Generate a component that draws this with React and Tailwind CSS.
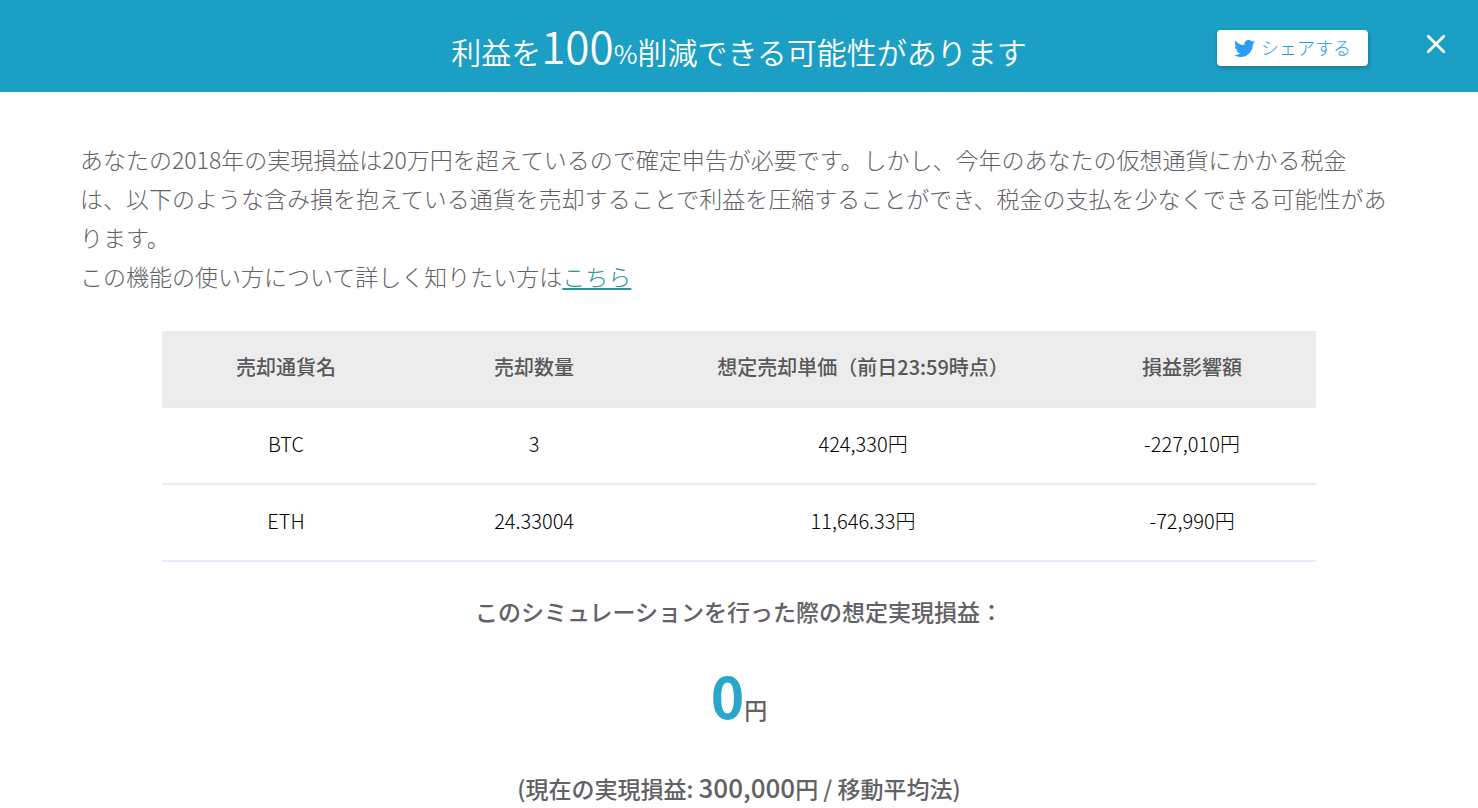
import { FaTwitter } from "react-icons/fa";

const columns = ["売却通貨名", "売却数量", "想定売却単価（前日23:59時点）", "損益影響額"];

const rows = [
  ["BTC", "3", "424,330円", "-227,010円"],
  ["ETH", "24.33004", "11,646.33円", "-72,990円"],
];

function Banner() {
  return (
    <header className="grid h-[92px] grid-cols-[1fr_auto_1fr] items-center bg-[#1b9fc5] px-7 text-white">
      <h1 className="col-start-2 pt-1.5 text-[30px] leading-[60px] font-[350] whitespace-nowrap">
        利益を<span className="text-[44px]">100</span>
        <span className="text-[26px]">%</span>削減できる可能性があります
      </h1>
      <div className="flex items-start justify-end gap-[54px] pt-1">
        <a
          href="#share"
          className="flex h-9 items-center gap-1.5 rounded bg-white px-[17px] text-lg leading-8 font-light whitespace-nowrap text-[#1d9bf0] shadow-[1px_2px_4px_rgba(0,0,0,0.25)]"
        >
          <FaTwitter className="size-[21px] text-[#2a9df4]" aria-hidden="true" />
          <span className="pb-0.5">シェアする</span>
        </a>
        <button type="button" aria-label="閉じる" className="p-1">
          <svg
            viewBox="0 0 20 20"
            className="size-5"
            fill="none"
            stroke="currentColor"
            strokeWidth="2.8"
            strokeLinecap="round"
          >
            <path d="M2.2 2.2 17.8 17.8M17.8 2.2 2.2 17.8" />
          </svg>
        </button>
      </div>
    </header>
  );
}

function SaleTable() {
  return (
    <table className="mx-auto mt-[35px] w-[78.1%] table-fixed border-collapse text-center text-xl">
      <colgroup>
        <col className="w-[21.5%]" />
        <col className="w-[21.5%]" />
        <col className="w-[35.5%]" />
        <col className="w-[21.5%]" />
      </colgroup>
      <thead className="bg-[#ececec] text-[#58585a]">
        <tr className="h-[76px] border-b-2 border-[#e8ebf7]">
          {columns.map((name) => (
            <th key={name} scope="col" className="pb-1 font-medium whitespace-nowrap">
              {name}
            </th>
          ))}
        </tr>
      </thead>
      <tbody className="font-light text-black">
        {rows.map((row) => (
          <tr key={row[0]} className="h-[77px] border-b-2 border-[#e8ebf7]">
            {row.map((cell) => (
              <td key={cell} className="pb-1">
                {cell}
              </td>
            ))}
          </tr>
        ))}
      </tbody>
    </table>
  );
}

export default function App() {
  return (
    <div
      lang="ja"
      className="min-h-screen bg-white font-['Noto_Sans_CJK_JP',sans-serif] text-[#626266]"
    >
      <Banner />
      <main className="pt-12">
        <p className="px-20 text-[23px] leading-[39px] font-light">
          あなたの2018年の実現損益は20万円を超えているので確定申告が必要です。しかし、今年のあなたの仮想通貨にかかる税金
          <br />
          は、以下のような含み損を抱えている通貨を売却することで利益を圧縮することができ、税金の支払を少なくできる可能性があります。
          <br />
          この機能の使い方について詳しく知りたい方は
          <a href="#guide" className="text-[#2a9498] underline decoration-2 underline-offset-2">
            こちら
          </a>
        </p>
        <SaleTable />
        <section className="text-center text-[23px] font-medium">
          <h2 className="mt-[29px] leading-10">このシミュレーションを行った際の想定実現損益：</h2>
          <p className="mt-[21px] leading-[84px]">
            <span className="text-[57px] font-bold text-[#29a7cb]">0</span>円
          </p>
          <p className="mt-4 leading-10">
            (現在の実現損益: <span className="text-[26px]">300,000</span>円 / 移動平均法)
          </p>
        </section>
      </main>
    </div>
  );
}
